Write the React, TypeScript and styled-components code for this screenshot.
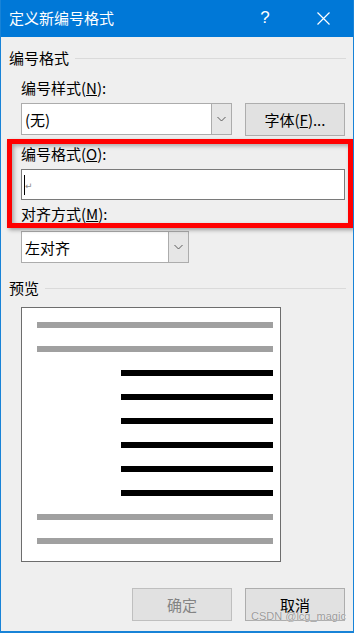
import React from "react";
import styled, { createGlobalStyle } from "styled-components";

const Global = createGlobalStyle`
  html, body { margin: 0; padding: 0; background: #efefef; }
  * { box-sizing: border-box; }
`;

const FONT = `"Noto Sans CJK SC", "Liberation Sans", sans-serif`;

const Window = styled.div`
  position: relative;
  width: 354px;
  height: 633px;
  background: #efefef;
  border-left: 1px solid #1883d7;
  border-right: 1px solid #1883d7;
  border-bottom: 2px solid #1883d7;
  display: flex;
  flex-direction: column;
  font-family: ${FONT};
  font-size: 15px;
  color: #000;
  overflow: hidden;
`;

const TitleBar = styled.div`
  height: 37px;
  background: #0078d7;
  color: #fff;
  display: flex;
  align-items: center;
  padding-left: 9px;
  padding-right: 8px;
  margin: 0 -1px;
  padding-bottom: 1px;
  gap: 12px;
`;

const Title = styled.div`
  flex: 1;
  font-size: 15px;
  line-height: 20px;
`;

const TitleButton = styled.div`
  width: 46px;
  height: 36px;
  display: flex;
  align-items: center;
  justify-content: center;
  font-family: "Liberation Sans", sans-serif;
  font-size: 17px;
  color: #fff;
`;

const Content = styled.div`
  flex: 1;
  display: flex;
  flex-direction: column;
  padding: 0 7px 0 8px;
`;

const GroupHeader = styled.div<{ $top: number }>`
  display: flex;
  align-items: center;
  gap: 6px;
  height: 20px;
  line-height: 20px;
  margin-top: ${(p) => p.$top}px;
  &::after {
    content: "";
    flex: 1;
    height: 1px;
    background: #dadada;
  }
`;

const Label = styled.div<{ $top: number }>`
  height: 20px;
  line-height: 20px;
  margin-top: ${(p) => p.$top}px;
  margin-left: 12px;
  white-space: nowrap;
`;

const Row = styled.div<{ $top: number }>`
  display: flex;
  gap: 13px;
  margin-top: ${(p) => p.$top}px;
  margin-left: 12px;
`;

const Select = styled.div<{ $w: number }>`
  width: ${(p) => p.$w}px;
  height: 32px;
  background: #fff;
  border: 1px solid #acacac;
  display: flex;
  align-items: stretch;
`;

const SelectValue = styled.div`
  flex: 1;
  padding-left: 3px;
  display: flex;
  align-items: center;
`;

const SelectArrow = styled.div`
  width: 20px;
  background: #e6e6e6;
  border-left: 1px solid #acacac;
  display: flex;
  align-items: center;
  justify-content: center;
`;

const Button = styled.div<{ $disabled?: boolean }>`
  width: 100px;
  height: 33px;
  background: #e1e1e1;
  border: 1px solid ${(p) => (p.$disabled ? "#bfbfbf" : "#adadad")};
  color: ${(p) => (p.$disabled ? "#838383" : "#000")};
  display: flex;
  align-items: center;
  justify-content: center;
`;

const Input = styled.div`
  position: relative;
  width: 324px;
  height: 31px;
  background: #fff;
  border: 1px solid #7a7a7a;
  margin-top: 5px;
  margin-left: 12px;
  display: flex;
  align-items: center;
  padding-left: 2px;
`;

const Caret = styled.div`
  width: 1px;
  height: 20px;
  background: #000;
`;

const ReturnMark = styled.span`
  font-family: "DejaVu Sans", sans-serif;
  font-size: 9px;
  color: #8a8a8a;
  margin-top: 2px;
`;

const Preview = styled.div`
  width: 260px;
  height: 255px;
  background: #fff;
  border: 1px solid #6d6d6d;
  margin-top: 9px;
  margin-left: 12px;
  padding: 14px 7px 0 15px;
  display: flex;
  flex-direction: column;
  gap: 18px;
`;

const PreviewLine = styled.div<{ $indent?: number; $dark?: boolean }>`
  height: 6px;
  margin-left: ${(p) => p.$indent || 0}px;
  background: ${(p) => (p.$dark ? "#000" : "#a0a0a0")};
`;

const Footer = styled.div`
  display: flex;
  justify-content: flex-end;
  gap: 13px;
  margin-top: 26px;
  padding-right: 1px;
`;

const Highlight = styled.div`
  position: absolute;
  left: 6px;
  top: 139px;
  width: 346px;
  height: 89px;
  border: 5px solid #ff0000;
  box-shadow: 2px 2px 4px rgba(0, 0, 0, 0.35), inset 2px 2px 4px rgba(0, 0, 0, 0.3);
  pointer-events: none;
`;

const Watermark = styled.div`
  position: absolute;
  left: 250px;
  top: 610px;
  white-space: nowrap;
  font-family: "Liberation Sans", sans-serif;
  font-size: 11px;
  color: #9a9a9a;
  text-shadow: 0 0 1px #fff;
`;

const Chevron = () => (
  <svg width="9" height="6" viewBox="0 0 9 6">
    <path d="M0.5 1 L4.5 5 L8.5 1" fill="none" stroke="#5a5a5a" strokeWidth="1" />
  </svg>
);

const CloseIcon = () => (
  <svg width="13" height="13" viewBox="0 0 13 13">
    <path d="M0.5 0.5 L12.5 12.5 M12.5 0.5 L0.5 12.5" stroke="#fff" strokeWidth="1.2" />
  </svg>
);

export default function App() {
  const lines: { indent?: number; dark?: boolean }[] = [
    {},
    {},
    { indent: 84, dark: true },
    { indent: 84, dark: true },
    { indent: 84, dark: true },
    { indent: 84, dark: true },
    { indent: 84, dark: true },
    { indent: 84, dark: true },
    {},
    {},
  ];
  return (
    <>
      <Global />
      <Window>
        <TitleBar>
          <Title>定义新编号格式</Title>
          <TitleButton>?</TitleButton>
          <TitleButton>
            <CloseIcon />
          </TitleButton>
        </TitleBar>
        <Content>
          <GroupHeader $top={11}>编号格式</GroupHeader>
          <Label $top={10}>
            编号样式(<u>N</u>):
          </Label>
          <Row $top={5}>
            <Select $w={211}>
              <SelectValue>(无)</SelectValue>
              <SelectArrow>
                <Chevron />
              </SelectArrow>
            </Select>
            <Button>
              字体(<u>F</u>)...
            </Button>
          </Row>
          <Label $top={8}>
            编号格式(<u>O</u>):
          </Label>
          <Input>
            <Caret />
            <ReturnMark>↵</ReturnMark>
          </Input>
          <Label $top={4}>
            对齐方式(<u>M</u>):
          </Label>
          <Row $top={7}>
            <Select $w={168}>
              <SelectValue>左对齐</SelectValue>
              <SelectArrow>
                <Chevron />
              </SelectArrow>
            </Select>
          </Row>
          <GroupHeader $top={15}>预览</GroupHeader>
          <Preview>
            {lines.map((l, i) => (
              <PreviewLine key={i} $indent={l.indent} $dark={l.dark} />
            ))}
          </Preview>
          <Footer>
            <Button $disabled>确定</Button>
            <Button>取消</Button>
          </Footer>
        </Content>
        <Highlight />
        <Watermark>CSDN @lcg_magic</Watermark>
      </Window>
    </>
  );
}
